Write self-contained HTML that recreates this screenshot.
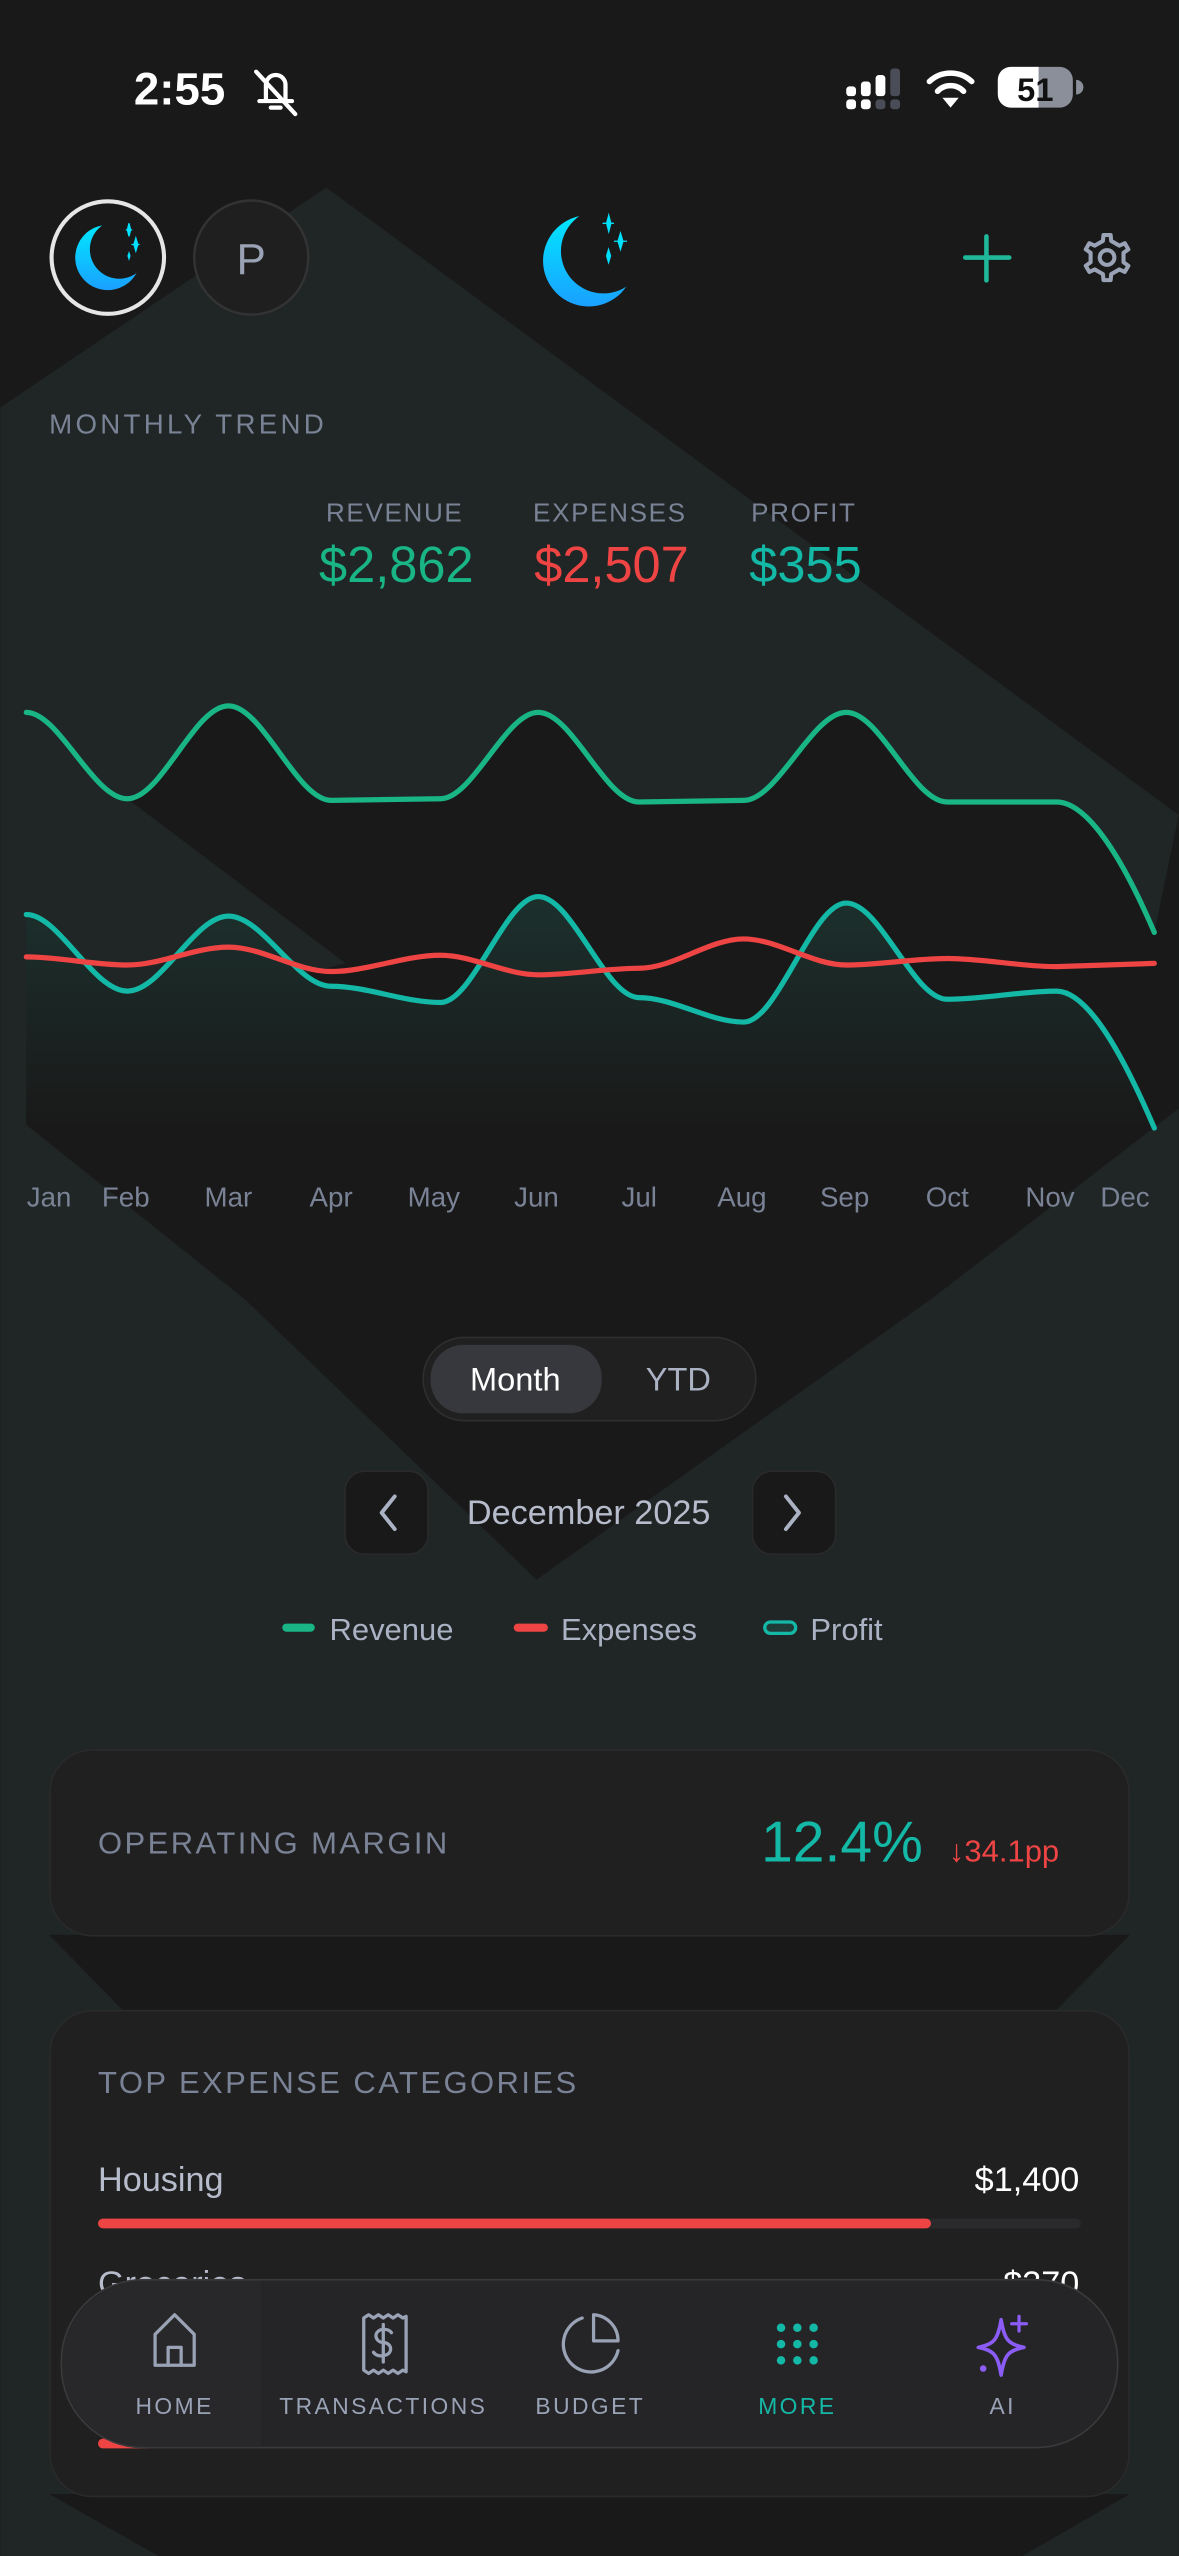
<!DOCTYPE html>
<html><head><meta charset="utf-8"><style>
html,body{margin:0;padding:0;background:#191919;}
svg{display:block;font-family:"Liberation Sans",sans-serif;}
</style></head><body>
<svg width="1179" height="2556" viewBox="0 0 723 1568" xmlns="http://www.w3.org/2000/svg">
<defs>
<linearGradient id="moon" x1="0" y1="0" x2="0" y2="1"><stop offset="0" stop-color="#00e8ff"/><stop offset="1" stop-color="#1aa0ff"/></linearGradient>
<linearGradient id="pf" x1="0" y1="0" x2="0" y2="1"><stop offset="0" stop-color="#1c302d"/><stop offset="1" stop-color="#191919"/></linearGradient>
<mask id="m1"><rect x="300" y="100" width="120" height="120" fill="#fff"/><circle cx="370" cy="154" r="26" fill="#000"/></mask>
<mask id="m2"><rect x="20" y="110" width="100" height="100" fill="#fff"/><circle cx="73" cy="153" r="18" fill="#000"/></mask>
</defs>
<rect width="723" height="1568" fill="#1f2625"/>
<polygon points="0,0 723,0 723,500 200,115 0,250" fill="#191919"/>
<path d="M78,490 C99,490 119,433 140,433 C161,433 182,491 203,491 L270,490 C290,490 310,437 330,437 C351,437 371,492 392,492 L456,491 C477,491 498,437 519,437 C540,437 560,492 581,492 L648,492 C668,492 690,530 708,572 L723,500 L723,680 L571,797 L329,969 L150,797 L16,690 L16,640 L212,591 Z" fill="#191919"/>
<path d="M16,561 C36,561 57,608 78,608 C99,608 119,562 140,562 C161,562 182,605 203,605 C225,605 248,615 270,615 C290,615 310,550 330,550 C351,550 371,612 392,612 C413,612 435,627 456,627 C477,627 498,554 519,554 C540,554 560,613 581,613 C603,613 626,608 648,608 C668,608 690,650 708,692 L708,692 L30,692 Q16,692 16,678 Z" fill="url(#pf)"/>
<path d="M16,437 C36,437 57,490 78,490 C99,490 119,433 140,433 C161,433 182,491 203,491 L270,490 C290,490 310,437 330,437 C351,437 371,492 392,492 L456,491 C477,491 498,437 519,437 C540,437 560,492 581,492 L648,492 C668,492 690,530 708,572" fill="none" stroke="#19b585" stroke-width="3.2" stroke-linecap="round"/>
<path d="M16,561 C36,561 57,608 78,608 C99,608 119,562 140,562 C161,562 182,605 203,605 C225,605 248,615 270,615 C290,615 310,550 330,550 C351,550 371,612 392,612 C413,612 435,627 456,627 C477,627 498,554 519,554 C540,554 560,613 581,613 C603,613 626,608 648,608 C668,608 690,650 708,692" fill="none" stroke="#14b8a6" stroke-width="3.2" stroke-linecap="round"/>
<path d="M16,587 C36,587 57,592 78,592 C99,592 119,581 140,581 C161,581 182,596 203,596 C225,596 248,586 270,586 C290,586 310,598 330,598 C351,598 371,594 392,594 C413,594 435,576 456,576 C477,576 498,592 519,592 C540,592 560,588 581,588 C603,588 626,593 648,593 L708,591" fill="none" stroke="#ef4444" stroke-width="3.2" stroke-linecap="round"/>
<polygon points="30,1187 693,1187 648,1233 75,1233" fill="#191919"/>
<polygon points="30,1530 693,1530 627,1568 97,1568" fill="#191919"/>

<text x="82" y="64" fill="#fff" font-size="28" font-weight="bold">2:55</text>
<g fill="none" stroke="#fff" stroke-width="2.6" stroke-linecap="round">
<path d="M159,62 h20 M163,62 v-10 a6,6 0 0 1 12,0 v10 M166,66 h6"/><path d="M157,44 L181,70"/>
</g>
<g fill="#fff"><rect x="519" y="53" width="6" height="6" rx="2"/><rect x="528" y="50" width="6" height="9" rx="2"/><rect x="537" y="46" width="6" height="13" rx="2"/><rect x="519" y="61" width="6" height="6" rx="2"/><rect x="528" y="61" width="6" height="6" rx="2"/></g>
<g fill="#4a4d57"><rect x="546" y="42" width="6" height="17" rx="2"/><rect x="537" y="61" width="6" height="6" rx="2"/><rect x="546" y="61" width="6" height="6" rx="2"/></g>
<g fill="none" stroke="#fff" stroke-width="3.4" stroke-linecap="round"><path d="M570,50 a19,19 0 0 1 26,0"/><path d="M575,56 a11,11 0 0 1 16,0"/></g>
<path d="M578,60 L583,66 L588,60 Z" fill="#fff"/>
<rect x="612" y="41" width="46" height="25" rx="8" fill="#8a8f99"/>
<path d="M620,41 H637 V66 H620 A8,8 0 0 1 612,58 V49 A8,8 0 0 1 620,41 Z" fill="#fff"/>
<path d="M660,49 a4,4 0 0 1 0,9 Z" fill="#8a8f99"/>
<text x="635" y="62" fill="#111" font-size="20" font-weight="bold" text-anchor="middle">51</text>

<circle cx="66" cy="158" r="34.5" fill="#191919" stroke="#e6e6e6" stroke-width="2.5"/>
<circle cx="66" cy="158" r="20" fill="url(#moon)" mask="url(#m2)"/>
<path d="M78,141 l1,4 l1,-4 l-1,-4 z M77,141 h4" fill="#00e0ff" stroke="#00e0ff" stroke-width="0.8"/>
<path d="M82,150 l1.2,4 l1.2,-4 l-1.2,-4 z M80.5,150 h5" fill="#00e0ff" stroke="#00e0ff" stroke-width="0.8"/>
<path d="M78,157 l1,3 l1,-3 l-1,-3 z" fill="#00e0ff"/>
<circle cx="154" cy="158" r="35" fill="#1f1f1f" stroke="#333" stroke-width="1.5"/>
<text x="154" y="168" fill="#9aa3b5" font-size="27" text-anchor="middle">P</text>
<circle cx="361" cy="160" r="28" fill="url(#moon)" mask="url(#m1)"/>
<g fill="#00e0ff" stroke="#00e0ff" stroke-width="0.8"><path d="M372,137 l1.3,5 l1.3,-5 l-1.3,-5 z M369.5,137 h7"/><path d="M379,148 l1.5,5 l1.5,-5 l-1.5,-5 z M376.5,148 h8"/><path d="M372,157 l1.2,4 l1.2,-4 l-1.2,-4 z"/></g>
<path d="M605,145 V172 M592,158 H619" stroke="#1fb89a" stroke-width="2.8" stroke-linecap="round"/>
<polygon points="676.46,147.81 676.81,144.17 681.19,144.17 681.54,147.81 686.55,150.71 689.88,149.19 692.07,152.98 689.09,155.11 689.09,160.89 692.07,163.02 689.88,166.81 686.55,165.29 681.54,168.19 681.19,171.83 676.81,171.83 676.46,168.19 671.45,165.29 668.12,166.81 665.93,163.02 668.91,160.89 668.91,155.11 665.93,152.98 668.12,149.19 671.45,150.71" fill="none" stroke="#9aa3b5" stroke-width="2.5" stroke-linejoin="round"/>
<circle cx="679" cy="158" r="4.5" fill="none" stroke="#9aa3b5" stroke-width="2.5"/>

<text x="30" y="266" fill="#7a8296" font-size="17" letter-spacing="2">MONTHLY TREND</text>
<g font-size="16" fill="#7a8296" text-anchor="middle" letter-spacing="1">
<text x="242" y="320">REVENUE</text><text x="374" y="320">EXPENSES</text><text x="493" y="320">PROFIT</text></g>
<g font-size="31" text-anchor="middle">
<text x="243" y="357" fill="#19b585">$2,862</text><text x="375" y="357" fill="#ef4444">$2,507</text><text x="494" y="357" fill="#14b8a6">$355</text></g>
<g font-size="17" fill="#7a8296" text-anchor="middle">
<text x="30" y="740">Jan</text><text x="77" y="740">Feb</text><text x="140" y="740">Mar</text><text x="203" y="740">Apr</text><text x="266" y="740">May</text><text x="329" y="740">Jun</text><text x="392" y="740">Jul</text><text x="455" y="740">Aug</text><text x="518" y="740">Sep</text><text x="581" y="740">Oct</text><text x="644" y="740">Nov</text><text x="690" y="740">Dec</text></g>

<rect x="259.5" y="820.5" width="204" height="51" rx="25" fill="#202020" stroke="#2e2e2e"/>
<rect x="264" y="825" width="105" height="42" rx="20" fill="#37383d"/>
<text x="316" y="853" fill="#fff" font-size="20" text-anchor="middle">Month</text>
<text x="416" y="853" fill="#aab2c4" font-size="20" text-anchor="middle">YTD</text>
<rect x="211.5" y="902.5" width="51" height="51" rx="12" fill="#191919" stroke="#2a2a2a"/>
<rect x="461.5" y="902.5" width="51" height="51" rx="12" fill="#191919" stroke="#2a2a2a"/>
<path d="M242,918 L234,928 L242,938" fill="none" stroke="#aab2c4" stroke-width="2.4" stroke-linecap="round" stroke-linejoin="round"/>
<path d="M482,918 L490,928 L482,938" fill="none" stroke="#aab2c4" stroke-width="2.4" stroke-linecap="round" stroke-linejoin="round"/>
<text x="361" y="935" fill="#b6bccb" font-size="21" text-anchor="middle">December 2025</text>

<rect x="173" y="996" width="20" height="5" rx="2.5" fill="#19b585"/>
<text x="202" y="1006" fill="#aab2c4" font-size="19">Revenue</text>
<rect x="315" y="996" width="21" height="5" rx="2.5" fill="#ef4444"/>
<text x="344" y="1006" fill="#aab2c4" font-size="19">Expenses</text>
<rect x="469" y="995" width="19" height="7" rx="3.5" fill="#1f3c38" stroke="#14b8a6" stroke-width="2"/>
<text x="497" y="1006" fill="#aab2c4" font-size="19">Profit</text>

<rect x="30.5" y="1073.5" width="662" height="114" rx="26" fill="#202020" stroke="#2a2a2a"/>
<text x="60" y="1137" fill="#7a8296" font-size="19" letter-spacing="1.5">OPERATING MARGIN</text>
<text x="566" y="1142" fill="#14b8a6" font-size="35" text-anchor="end">12.4%</text>
<text x="582" y="1142" fill="#ef4444" font-size="19">↓34.1pp</text>

<rect x="30.5" y="1233.5" width="662" height="298" rx="26" fill="#202020" stroke="#2a2a2a"/>
<text x="60" y="1284" fill="#7a8296" font-size="19" letter-spacing="1.5">TOP EXPENSE CATEGORIES</text>
<text x="60" y="1344" fill="#b6bccb" font-size="21">Housing</text>
<text x="662" y="1344" fill="#fff" font-size="21" text-anchor="end">$1,400</text>
<rect x="60" y="1361" width="603" height="6" rx="3" fill="#2a2a2c"/>
<rect x="60" y="1361" width="511" height="6" rx="3" fill="#ef4444"/>
<text x="60" y="1408" fill="#b6bccb" font-size="21">Groceries</text>
<text x="662" y="1408" fill="#fff" font-size="21" text-anchor="end">$370</text>
<rect x="60" y="1496" width="34" height="6" rx="3" fill="#ef4444"/>

<rect x="37.5" y="1398.5" width="648" height="103" rx="50" fill="#252528" stroke="#3a3a3c"/>
<path d="M88,1399 H160 V1501 H88 A51,51 0 0 1 38,1450 A51,51 0 0 1 88,1399 Z" fill="#28282b"/>
<g fill="none" stroke="#9aa3b5" stroke-width="2" stroke-linejoin="round" stroke-linecap="round">
<path d="M95,1451 V1432 L107,1420 L119,1432 V1451 Z"/><path d="M103,1451 V1440 H111 V1451"/>
<path d="M223,1422 l3,-2 l3,2 l3,-2 l3,2 l3,-2 l3,2 l3,-2 l3,2 l2,-1 V1455 l-2,-1 l-3,2 l-3,-2 l-3,2 l-3,-2 l-3,2 l-3,-2 l-3,2 l-3,-2 Z"/>
<path d="M240,1431 a5,4 0 0 0 -5,-2 a4.5,4 0 0 0 0,8 a4.5,4 0 0 1 0,8 a5,4 0 0 1 -6,-2 M235,1426 V1449"/>
<path d="M357,1422 A17,17 0 1 0 379,1442"/><path d="M364,1420 A16,16 0 0 1 379,1436 H364 Z"/>
</g>
<g fill="#14b8a6"><circle cx="479" cy="1428" r="2.6"/><circle cx="489" cy="1428" r="2.6"/><circle cx="499" cy="1428" r="2.6"/><circle cx="479" cy="1438" r="2.6"/><circle cx="489" cy="1438" r="2.6"/><circle cx="499" cy="1438" r="2.6"/><circle cx="479" cy="1448" r="2.6"/><circle cx="489" cy="1448" r="2.6"/><circle cx="499" cy="1448" r="2.6"/></g>
<path d="M614,1423 C616,1435 618,1438 628,1440 C618,1442 616,1445 614,1457 C612,1445 610,1442 600,1440 C610,1438 612,1435 614,1423 Z" fill="none" stroke="#8b5cf6" stroke-width="2.2" stroke-linejoin="round"/>
<path d="M625,1421 v9 M620.5,1425.5 h9" stroke="#8b5cf6" stroke-width="2" stroke-linecap="round"/>
<circle cx="603" cy="1453" r="2" fill="#8b5cf6"/>
<g font-size="14" letter-spacing="1.5" text-anchor="middle" fill="#9aa3b5">
<text x="107" y="1481">HOME</text><text x="235" y="1481">TRANSACTIONS</text><text x="362" y="1481">BUDGET</text><text x="489" y="1481" fill="#14b8a6">MORE</text><text x="615" y="1481">AI</text></g>
</svg>
</body></html>
